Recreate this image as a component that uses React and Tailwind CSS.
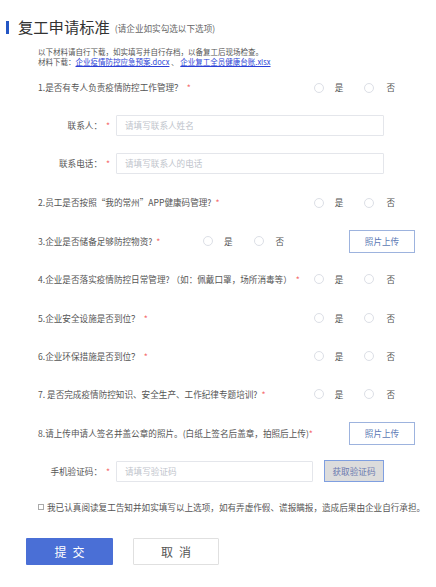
import React from "react";

const Star = () => <span className="text-[#f56c6c] ml-[4px]">*</span>;

function Radios() {
  return (
    <div className="flex items-center shrink-0">
      <span className="w-[10px] h-[10px] rounded-full border border-[#dcdfe6] bg-white" />
      <span className="ml-[11px] text-[#555]">是</span>
      <span className="ml-[21px] w-[10px] h-[10px] rounded-full border border-[#dcdfe6] bg-white" />
      <span className="ml-[12px] text-[#555]">否</span>
    </div>
  );
}

function UploadBtn() {
  return (
    <button className="ml-auto w-[66px] h-[23px] border border-[#9db3de] text-[#5b78b4] text-[8.6px] bg-white flex items-center justify-center">
      照片上传
    </button>
  );
}

function QRow({ h, children }) {
  return (
    <div className={`flex items-center pl-[38px] w-[395px] ${h}`}>
      <div className="whitespace-nowrap">{children}<Star /></div>
      <div className="ml-auto">
        <Radios />
      </div>
    </div>
  );
}

function InputRow({ h, label, placeholder }) {
  return (
    <div className={`flex items-center ${h}`}>
      <div className="w-[110px] text-right whitespace-nowrap">
        {label}
        <Star />
      </div>
      <div className="ml-[6px] w-[268px] h-[21px] border border-[#e4e6eb] rounded-[1px] flex items-center pl-[8px] text-[#c0c4cc]">
        {placeholder}
      </div>
    </div>
  );
}

export default function App() {
  return (
    <div className="w-[436px] h-[587px] bg-white text-[8.6px] text-[#555] font-['Noto_Sans_CJK_SC','Noto_Sans',sans-serif] leading-none">
      <div className="pt-[14px]">
        <div className="h-[26px] flex items-center pl-[6px]">
          <span className="w-[3px] h-[13px] bg-[#2456c4]" />
          <span className="ml-[9px] text-[15.3px] text-[#333]">复工申请标准</span>
          <span className="ml-[5px] text-[8.6px] text-[#666] mt-[2px]">(请企业如实勾选以下选项)</span>
        </div>
      </div>
      <div className="mt-[7px] pl-[38px] text-[7.5px] leading-[9.5px] text-[#555]">
        <div>以下材料请自行下载，如实填写并自行存档，以备复工后现场检查。</div>
        <div>
          材料下载：
          <span className="text-[#2b3fd6] underline">企业疫情防控应急预案.docx</span>
          {" 、 "}
          <span className="text-[#2b3fd6] underline">企业复工全员健康台账.xlsx</span>
        </div>
      </div>
      <div className="mt-[3px]">
        <QRow h="h-[37px]">1.是否有专人负责疫情防控工作管理？</QRow>
        <InputRow h="h-[38px]" label="联系人：" placeholder="请填写联系人姓名" />
        <InputRow h="h-[39px]" label="联系电话：" placeholder="请填写联系人的电话" />
        <QRow h="h-[39px]">2.员工是否按照“我的常州”APP健康码管理?</QRow>
        <div className="flex items-center pl-[38px] w-[415px] h-[38px]">
          <div className="w-[165px] whitespace-nowrap">
            3.企业是否储备足够防控物资?
            <Star />
          </div>
          <Radios />
          <UploadBtn />
        </div>
        <QRow h="h-[38px]">4.企业是否落实疫情防控日常管理? （如：佩戴口罩，场所消毒等）</QRow>
        <QRow h="h-[40px]">5.企业安全设施是否到位？</QRow>
        <QRow h="h-[36px]">6.企业环保措施是否到位？</QRow>
        <QRow h="h-[40px]">7. 是否完成疫情防控知识、安全生产、工作纪律专题培训?</QRow>
        <div className="flex items-center pl-[38px] w-[415px] h-[38px]">
          <div className="whitespace-nowrap">
            8.请上传申请人签名并盖公章的照片。(白纸上签名后盖章，拍照后上传)
            <span className="text-[#f56c6c]">*</span>
          </div>
          <UploadBtn />
        </div>
        <div className="flex items-center h-[38px]">
          <div className="w-[110px] text-right whitespace-nowrap">
            手机验证码：
            <Star />
          </div>
          <div className="ml-[6px] w-[197px] h-[21px] border border-[#e4e6eb] rounded-[1px] flex items-center pl-[8px] text-[#c0c4cc]">
            请填写验证码
          </div>
          <button className="ml-[11px] w-[60px] h-[22px] bg-[#dcdcdc] border border-[#7f9fe0] text-[#6c7bb0] text-[8.6px] flex items-center justify-center">
            获取验证码
          </button>
        </div>
        <div className="flex items-center h-[34px] pl-[38px]">
          <span className="w-[6px] h-[6px] border border-[#aaa] bg-white" />
          <span className="ml-[3px] whitespace-nowrap">
            我已认真阅读复工告知并如实填写以上选项，如有弄虚作假、谎报瞒报，造成后果由企业自行承担。
          </span>
        </div>
      </div>
      <div className="mt-[14px] pl-[26px] flex">
        <button className="w-[87px] h-[27px] bg-[#4a6fd6] text-white text-[12px] tracking-[6px] pl-[6px] rounded-[1px] flex items-center justify-center">
          提交
        </button>
        <button className="ml-[20px] w-[86px] h-[27px] bg-white border border-[#e0e0e0] text-[#555] text-[12px] tracking-[6px] pl-[6px] rounded-[1px] flex items-center justify-center">
          取消
        </button>
      </div>
    </div>
  );
}
